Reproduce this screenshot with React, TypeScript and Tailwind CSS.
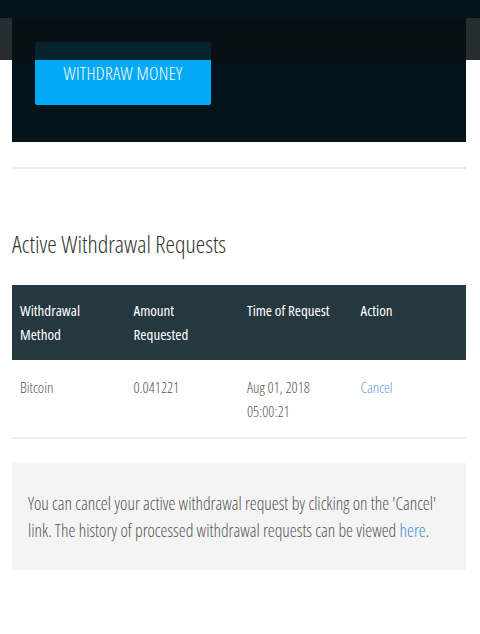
const F = { fontFamily: "'Open Sans', 'Liberation Sans', sans-serif", fontStretch: "75%" } as const;

export default function App() {
  const head = ["Withdrawal Method", "Amount Requested", "Time of Request", "Action"];
  return (
    <div className="relative min-h-[634px] bg-white pl-3 pr-[14px]" style={F}>
      <div className="absolute inset-x-0 top-0 z-10">
        <div className="h-[18px] bg-[#04141b]"></div>
        <div className="h-[42px] bg-[rgba(8,16,21,0.88)]"></div>
      </div>

      <div className="h-[142px] bg-[#03131a] pt-[42px] pl-[23px]">
        <button className="flex h-[63px] w-[176px] items-center justify-center rounded-[2px] bg-[#03a9f4] text-[18px] font-light tracking-[0.3px] text-white">
          WITHDRAW MONEY
        </button>
      </div>

      <div className="mt-[25px] border-t-2 border-[#ebebeb]"></div>

      <h2 className="mt-[60px] text-[24px] font-light leading-[30px] text-[#333]">Active Withdrawal Requests</h2>

      <div className="mt-[26px]">
        <div className="grid grid-cols-4 bg-[#25373f] pt-[13px] pb-[14px]">
          {head.map((h) => (
            <div key={h} className="pl-2 pr-3 text-[15px] font-normal leading-[24px] text-white">{h}</div>
          ))}
        </div>
        <div className="grid grid-cols-4 border-b-2 border-[#eeeeee] pt-[15px] pb-[14px] text-[15px] font-light leading-[24px] text-[#555]">
          <div className="pl-2">Bitcoin</div>
          <div className="pl-2">0.041221</div>
          <div className="pl-2 pr-6">Aug 01, 2018 05:00:21</div>
          <div className="pl-2 text-[#5a9bd0]">Cancel</div>
        </div>
      </div>

      <div className="mt-[24px] bg-[#f4f4f4] pl-4 pr-[24px] pt-[27px] pb-[26px] text-[17.5px] font-light leading-[27px] text-[#555]">
        You can cancel your active withdrawal request by clicking on the 'Cancel' link. The history of processed withdrawal requests can be viewed <span className="text-[#3d8fd6]">here</span>.
      </div>
    </div>
  );
}
